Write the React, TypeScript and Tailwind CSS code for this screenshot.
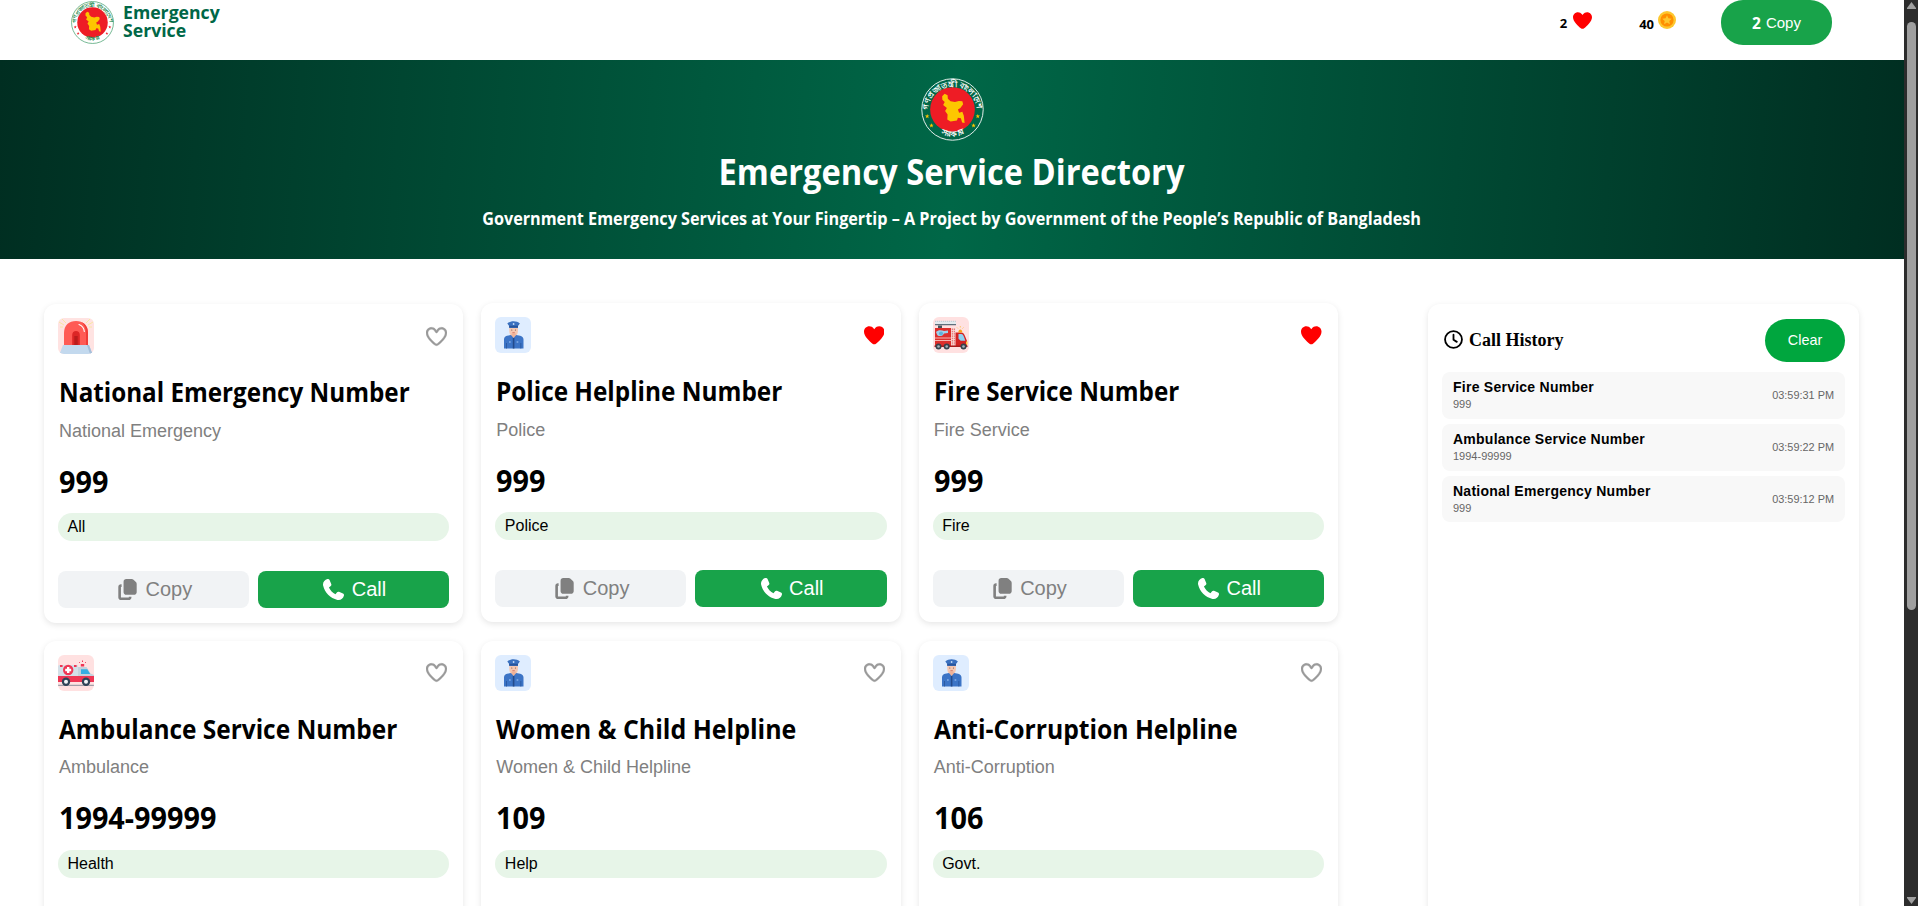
import type { ReactNode } from "react";

const HEART =
  "M241 87.1l15 20.7 15-20.7C296 52.5 336.2 32 378.9 32 452.4 32 512 91.6 512 165.1l0 2.6c0 112.2-139.9 242.5-212.9 298.2-12.4 9.4-27.6 14.1-43.1 14.1s-30.8-4.6-43.1-14.1C139.9 410.2 0 279.9 0 167.7l0-2.6C0 91.6 59.6 32 133.1 32 175.8 32 216 52.5 241 87.1z";
const HEART_INNER =
  "M378.9 80c-27.3 0-53 13.1-69 35.2l-34.4 47.6c-4.5 6.2-11.7 9.9-19.4 9.9s-14.9-3.7-19.4-9.9l-34.4-47.6c-16-22.1-41.7-35.2-69-35.2-47 0-85.1 38.1-85.1 85.1l0 2.6c0 49.9 32 98.4 68.1 142.3 41.1 50 91.4 94 125.9 120.3 3.2 2.4 7.9 4.2 14 4.2s10.8-1.8 14-4.2c34.5-26.3 84.8-70.4 125.9-120.3 36.2-43.9 68.1-92.4 68.1-142.3l0-2.6c0-47-38.1-85.1-85.1-85.1z";

function Heart({ filled, className }: { filled?: boolean; className: string }) {
  return (
    <svg viewBox="0 0 512 512" className={className} fill="currentColor" fillRule="evenodd">
      <path d={filled ? HEART : HEART + HEART_INNER} stroke={filled ? "none" : "currentColor"} strokeWidth="8" />
    </svg>
  );
}

function CopyIcon() {
  return (
    <svg viewBox="-64 0 576 512" className="h-[21px] w-[25px]" fill="currentColor">
      <path d="M192 0c-35.3 0-64 28.7-64 64l0 256c0 35.3 28.7 64 64 64l192 0c35.3 0 64-28.7 64-64l0-200.6c0-17.4-7.1-34.1-19.7-46.2L370.6 17.8C358.7 6.4 342.8 0 326.3 0L192 0zM64 128c-35.3 0-64 28.7-64 64L0 448c0 35.3 28.7 64 64 64l192 0c35.3 0 64-28.7 64-64l0-16-64 0 0 16-192 0 0-256 16 0 0-64-16 0z" />
    </svg>
  );
}

function PhoneIcon() {
  return (
    <svg viewBox="-32 0 576 512" className="h-[21px] w-[25px]" fill="currentColor">
      <path d="M160.2 25C152.3 6.1 131.7-3.9 112.1 1.4l-5.5 1.5c-64.6 17.6-119.8 80.2-103.7 156.4 37.1 175 174.8 312.7 349.8 349.8 76.3 16.2 138.8-39.1 156.4-103.7l1.5-5.5c5.4-19.7-4.7-40.3-23.5-48.1l-97.3-40.5c-16.5-6.9-35.6-2.1-47 11.8l-38.6 47.2C233.9 335.4 177.3 277 144.8 205.3L189 169.3c13.9-11.3 18.6-30.4 11.8-47L160.2 25z" />
    </svg>
  );
}

function Emblem({ id, ring, ink, star, className }: { id: string; ring: string; ink: string; star: string; className: string }) {
  return (
    <svg viewBox="0 0 64 64" className={className}>
      <circle cx="32" cy="32" r="31.2" fill={ring} stroke={ink} strokeWidth="0.9" />
      <circle cx="32" cy="32" r="22.7" fill="#ee1c25" />
      <path
        d="M21.5 18.500l2.500-2.500 3 1.500.3 3.500 2.700 2.500 4.500 1 4-1.200 3.500.4.8 3-2.800 3.800-2.500 1.500 1.200 3.200 3.300-.8 1.500 4 .8 7.400-2.500-.6-1.300-4.200-3-.5-1 2.800-6.500 1-3.300-2.200.3-5-2.500-3.600 1.800-3-3.800-3 1.600-3.200-2.400-2.200z"
        fill="#fdc600"
      />
      <path id={id + "t"} d="M7.300 33.500a24.700 24.700 0 1 1 49.400 0" fill="none" />
      <path id={id + "b"} d="M18 55.300a27.500 27.500 0 0 0 28 0" fill="none" />
      <text fontSize="7.800" fontWeight="700" fill={ink} className="font-sans">
        <textPath href={"#" + id + "t"} startOffset="50%" textAnchor="middle" textLength="74" lengthAdjust="spacingAndGlyphs">
          গণপ্রজাতন্ত্রী বাংলাদেশ
        </textPath>
      </text>
      <text fontSize="7.800" fontWeight="700" fill={ink} className="font-sans">
        <textPath href={"#" + id + "b"} startOffset="50%" textAnchor="middle" textLength="24" lengthAdjust="spacingAndGlyphs">
          সরকার
        </textPath>
      </text>
      {[
        [6.3, 38.8],
        [10.6, 48.2],
        [57.7, 38.8],
        [53.4, 48.2],
      ].map(([x, y]) => (
        <path key={x} transform={`translate(${x} ${y})`} d="M0-2.300l.6 1.600h1.700l-1.400 1 .6 1.700L0 1 -1.500 2l.6-1.700-1.400-1h1.700z" fill={star} />
      ))}
    </svg>
  );
}

function Siren() {
  return (
    <svg viewBox="0 0 36 36" className="size-9 rounded-md bg-[#ffe3e2]">
      <path d="M1 4l5 3M4 1l4 4M35 4l-5 3M32 1l-4 4M2 9l3 0M34 9l-3 0" stroke="#f8e7a4" strokeWidth="1" />
      <path d="M6 27V15C6 7 11 3 18 3s12 4 12 12v12z" fill="#ff5b55" />
      <path d="M28 27V15c0-5-2-9-5-11 5 2 7 6 7 11v12z" fill="#f03c37" />
      <path d="M21 6.5c3 1.2 5 3.5 5.3 7" stroke="#fff" strokeWidth="1.1" fill="none" strokeLinecap="round" />
      <path d="M14.2 27V17c0-2.5 1.5-4 3.8-4s3.8 1.500 3.800 4v10z" fill="#dc2626" />
      <path d="M16.300 27V18h3.400v9z" fill="#b91c1c" />
      <path d="M5 27h26l3.500 9h-33z" fill="#c3d9ee" />
      <path d="M29 27h2l3.500 9h-2.500z" fill="#a6c0da" />
    </svg>
  );
}

function Police() {
  return (
    <svg viewBox="0 0 36 36" className="size-9 rounded-md bg-[#dfedff]">
      <path d="M14.300 10h8.600v4.500c0 3-2 5-4.300 5s-4.300-2-4.300-5z" fill="#f6c7b0" />
      <path d="M16.500 16.500h4.300v4l-2.200 2-2.100-2z" fill="#eeb298" />
      <path d="M12.300 6.500c1.500-1.500 4-2.300 6.300-2.300s4.800.8 6.300 2.300l-1.900 2.500v2h-8.800v-2z" fill="#3a70bf" />
      <path d="M14.200 8.800h8.800v1.600h-8.800z" fill="#28549a" />
      <circle cx="18.600" cy="7" r=".9" fill="#c6dcf7" />
      <circle cx="16.800" cy="13" r=".5" fill="#54423b" />
      <circle cx="20.400" cy="13" r=".5" fill="#54423b" />
      <path d="M17.400 15.700h2.400" stroke="#c95a4a" strokeWidth=".7" />
      <path d="M9 31.500v-9c0-2 1.300-3.200 3-3.700l4-.8 2.600 3 2.600-3 4 .8c1.700.5 3.300 1.700 3.300 3.700v9z" fill="#3c74c6" />
      <path d="M17.800 21h1.600v10.500h-1.600z" fill="#234b8c" />
      <path d="M11.500 26v5.500M25.800 26v5.500" stroke="#28549a" strokeWidth=".8" />
      <path d="M14 25h1.700M21.600 25h1.700" stroke="#a9ccf5" strokeWidth="1.100" />
    </svg>
  );
}

function FireTruck() {
  return (
    <svg viewBox="0 0 36 36" className="size-9 rounded-md bg-[#ffe1e1]">
      <path d="M2 4h21v3H2z" fill="#e4eaee" />
      <path d="M2 4.300h21" stroke="#b5c0c8" strokeWidth=".8" strokeDasharray="1.200 .8" />
      <path d="M2 7.700h21" stroke="#5f6f7b" strokeWidth="1.300" />
      <path d="M5 8.500h4v2.500H5z" fill="#46535c" />
      <path d="M2 11h16v19H2z" fill="#dd2f2c" />
      <path d="M2 20.500h16v1H2zM2 23h16v1H2z" fill="#f5b5b0" />
      <path d="M3 15c2-2.500 6-2 8-1l4-.5v2.500l-4 .5c-1 3-6 3.500-7 1z" fill="#9fd3ec" />
      <circle cx="8" cy="16.500" r="2" fill="#5fb2da" />
      <path d="M18 11h4.500v18H18z" fill="#f7dcd9" />
      <path d="M19.300 11.500v17M21.300 11.500v17" stroke="#dd2f2c" strokeWidth=".7" strokeDasharray="1.500 .8" />
      <path d="M22.500 15.500h5.500c2 0 3 1 4 3.500l2 5v6H22.500z" fill="#d32222" />
      <path d="M25.500 17h2.800c1.300 0 2 1 2.700 3l1.300 3.800h-4.600l-2.200-2z" fill="#8fd0f0" />
      <path d="M25.300 15.500c0-4 4-4 4 0z" fill="#f9a11b" />
      <path d="M27.300 9v1.500M24 10.500l1 1M30.500 10.500l-1 1" stroke="#f9c04a" strokeWidth=".8" />
      <path d="M33 24.500h1.500v3H33z" fill="#ffc93c" />
      <path d="M1.500 28.500h33V30h-33z" fill="#a81b1b" />
      {[5.5, 13.7, 30.5].map((x) => (
        <g key={x}>
          <circle cx={x} cy="29.500" r="3" fill="#37434c" />
          <circle cx={x} cy="29.500" r="1.300" fill="#a6b3bc" />
        </g>
      ))}
    </svg>
  );
}

function Ambulance() {
  return (
    <svg viewBox="0 0 36 36" className="size-9 rounded-md bg-[#ffe1e1]">
      <path d="M1 10h19v12H0V11z" fill="#d3dfe7" />
      <path d="M20 12h8.500l4 6.500 3.500 1.500v3H20z" fill="#c3d2dc" />
      <path d="M23 14.200h6.300l2.900 4.800H23z" fill="#34aee4" />
      <path d="M0 21h36v6H0z" fill="#ef3654" />
      <circle cx="10.200" cy="15" r="5.200" fill="#ef3654" />
      <path d="M9 12h2.400v1.800h1.800v2.400h-1.800V18H9v-1.800H7.200v-2.400H9z" fill="#fff" />
      <path d="M2 10h2.600v2H2zM16 10h2.600v2H16zM22.800 9h3.400v2.600h-3.400z" fill="#ef3654" />
      <path d="M24.500 5.500V7M21 7l.8.8M28 7l-.8.800" stroke="#ef3654" strokeWidth="1" />
      <path d="M0 30.300h36" stroke="#8b8f9b" strokeWidth="1" />
      {[8, 28].map((x) => (
        <g key={x}>
          <circle cx={x} cy="26.800" r="4.200" fill="#2f4357" />
          <circle cx={x} cy="26.800" r="2" fill="#f2f5f7" />
        </g>
      ))}
    </svg>
  );
}

function Coin() {
  return (
    <svg viewBox="0 0 18 18" className="size-[18px]">
      <circle cx="9" cy="9" r="9" fill="#fdc72e" />
      <circle cx="9" cy="9" r="6.600" fill="#ff8f00" />
      <path d="M9 4.300l1.400 3 3.300.4-2.400 2.300.6 3.200L9 11.600l-2.900 1.600.6-3.200-2.400-2.300 3.300-.4z" fill="#fdc72e" />
    </svg>
  );
}

type Service = { icon: ReactNode; title: string; fit: string; sub: string; number: string; tag: string; liked?: boolean };

const services: Service[] = [
  { icon: <Siren />, title: "National Emergency Number", fit: "scale-x-[93.2%]", sub: "National Emergency", number: "999", tag: "All" },
  { icon: <Police />, title: "Police Helpline Number", fit: "scale-x-[93.6%]", sub: "Police", number: "999", tag: "Police", liked: true },
  { icon: <FireTruck />, title: "Fire Service Number", fit: "scale-x-[93.2%]", sub: "Fire Service", number: "999", tag: "Fire", liked: true },
  { icon: <Ambulance />, title: "Ambulance Service Number", fit: "scale-x-[93.9%]", sub: "Ambulance", number: "1994-99999", tag: "Health" },
  { icon: <Police />, title: "Women & Child Helpline", fit: "scale-x-[96%]", sub: "Women & Child Helpline", number: "109", tag: "Help" },
  { icon: <Police />, title: "Anti-Corruption Helpline", fit: "scale-x-[95%]", sub: "Anti-Corruption", number: "106", tag: "Govt." },
];

const history = [
  { title: "Fire Service Number", number: "999", time: "03:59:31 PM" },
  { title: "Ambulance Service Number", number: "1994-99999", time: "03:59:22 PM" },
  { title: "National Emergency Number", number: "999", time: "03:59:12 PM" },
];

function Card({ s }: { s: Service }) {
  return (
    <div
      className={
        "flex h-[318.7px] flex-col rounded-xl bg-white px-3.5 pt-3.5 shadow-[0_2px_6px_rgba(0,0,0,0.1)] " +
        (s.liked ? "-translate-y-px" : "")
      }
    >
      <div className="flex h-9 items-center justify-between">
        {s.icon}
        <div className="flex w-[25px] justify-center">
          <Heart filled={s.liked} className={s.liked ? "size-[20.500px] text-[#ff0000]" : "size-[21px] text-[#9a9a9a]"} />
        </div>
      </div>
      <h2 className={"mt-[18.300px] origin-left pl-px font-['Open_Sans'] text-[26px] leading-10 font-bold whitespace-nowrap " + s.fit}>{s.title}</h2>
      <p className="mt-[4.500px] pl-px text-lg leading-7 text-[#808080]">{s.sub}</p>
      <div className="mt-[17px] origin-left scale-x-[96%] pl-px font-['Open_Sans'] text-[30px] leading-10 font-bold">{s.number}</div>
      <div className="mt-[11.500px] h-7 rounded-full bg-[#e7f5e8] px-[9.500px] text-base leading-7">{s.tag}</div>
      <div className="mt-[29.700px] grid grid-cols-2 gap-[9px] text-xl">
        <div className="flex h-[37px] items-center justify-center gap-[5.500px] rounded-lg bg-[#f1f3f5] text-[#808080]">
          <CopyIcon />
          Copy
        </div>
        <div className="flex h-[37px] items-center justify-center gap-[5.500px] rounded-lg bg-[#18a34a] text-white">
          <PhoneIcon />
          Call
        </div>
      </div>
    </div>
  );
}

export default function App() {
  return (
    <div className="flex h-[906px] w-[1918px] overflow-hidden bg-white font-['Liberation_Sans',Arial,sans-serif] text-black">
      <div className="flex w-[1904px] shrink-0 flex-col">
        <header className="flex h-[60px] shrink-0 items-start justify-between pr-[72px] pl-[71px]">
          <div className="flex gap-[9px]">
            <Emblem id="a" ring="#ffffff" ink="#1d8a4e" star="#ee1c25" className="mt-px size-[43px]" />
            <div className="mt-[3px] origin-left font-['Open_Sans'] text-[18px] leading-[18px] font-bold text-[#006747] scale-x-[98%]">
              Emergency
              <br />
              Service
            </div>
          </div>
          <div className="flex items-start font-['Open_Sans'] text-[13px] leading-[18px] font-bold">
            <span className="mt-[14px]">2</span>
            <Heart filled className="mt-[11px] ml-1.5 size-[19px] text-[#ff0000]" />
            <span className="mt-[15px] ml-[47px]">40</span>
            <span className="mt-[11px] ml-1">
              <Coin />
            </span>
            <div className="ml-[45px] flex h-[45px] w-[111px] items-center justify-center gap-[5px] rounded-[22px] bg-[#18a34a] text-white">
              <span className="text-[15.500px]">2</span>
              <span className="font-['Liberation_Sans'] text-[15px] font-normal">Copy</span>
            </div>
          </div>
        </header>

        <section className="flex h-[199px] shrink-0 flex-col items-center bg-[linear-gradient(94deg,#002e21_0%,#006747_50%,#002e21_100%)] pt-[18px] font-['Open_Sans'] text-white">
          <Emblem id="b" ring="#006747" ink="#ffffff" star="#fdc600" className="size-[63px]" />
          <h1 className="mt-2 scale-x-[93.4%] text-[35px] leading-[46px] font-bold">Emergency Service Directory</h1>
          <p className="mt-3 scale-x-[95.300%] text-[17px] leading-6 font-bold whitespace-nowrap">
            Government Emergency Services at Your Fingertip – A Project by Government of the People’s Republic of Bangladesh
          </p>
        </section>

        <main className="flex items-start justify-between pt-[45px] pr-[45px] pl-11">
          <div className="grid w-[1294px] grid-cols-3 gap-[18px]">
            {services.map((s) => (
              <Card key={s.title} s={s} />
            ))}
          </div>

          <aside className="h-[660px] w-[431px] rounded-xl bg-white px-3.5 pt-[15px] shadow-[0_2px_6px_rgba(0,0,0,0.1)]">
            <div className="flex h-[43px] items-center justify-between">
              <div className="flex items-center gap-[6px] pl-0.5 font-['Liberation_Serif'] text-[18px] font-bold">
                <svg viewBox="0 0 20 20" className="mb-0.5 size-[19px]" fill="none" stroke="currentColor" strokeWidth="1.900">
                  <circle cx="10" cy="10" r="8.900" />
                  <path d="M10 5v5.200l3.500 2.300" strokeLinecap="round" strokeLinejoin="round" />
                </svg>
                Call History
              </div>
              <div className="flex h-[43px] w-20 items-center justify-center rounded-[22px] bg-[#00a63e] text-[14.400px] text-white">Clear</div>
            </div>
            <div className="mt-[10px] flex flex-col gap-[5px]">
              {history.map((h) => (
                <div key={h.title} className="flex h-[46.800px] items-center justify-between rounded-lg bg-[#f8f8f8] px-[11px]">
                  <div>
                    <div className="text-sm leading-[18px] font-bold tracking-[0.25px]">{h.title}</div>
                    <div className="text-[11px] leading-4 text-[#666]">{h.number}</div>
                  </div>
                  <div className="text-[10.900px] text-[#666]">{h.time}</div>
                </div>
              ))}
            </div>
          </aside>
        </main>
      </div>

      <div className="flex w-[14px] shrink-0 flex-col items-center justify-between bg-[#2c2c2c] pt-0.5 pb-0.5 pl-px">
        <svg viewBox="0 0 9 7" className="h-[7px] w-[9px]" fill="#9f9f9f">
          <path d="M4.500 0L9 6v1H0V6z" />
        </svg>
        <div className="mt-[13px] mb-auto h-[588px] w-[9px] rounded-full bg-[#9f9f9f]" />
        <svg viewBox="0 0 9 7" className="h-[7px] w-[9px]" fill="#9f9f9f">
          <path d="M4.500 7L9 1V0H0v1z" />
        </svg>
      </div>
    </div>
  );
}
